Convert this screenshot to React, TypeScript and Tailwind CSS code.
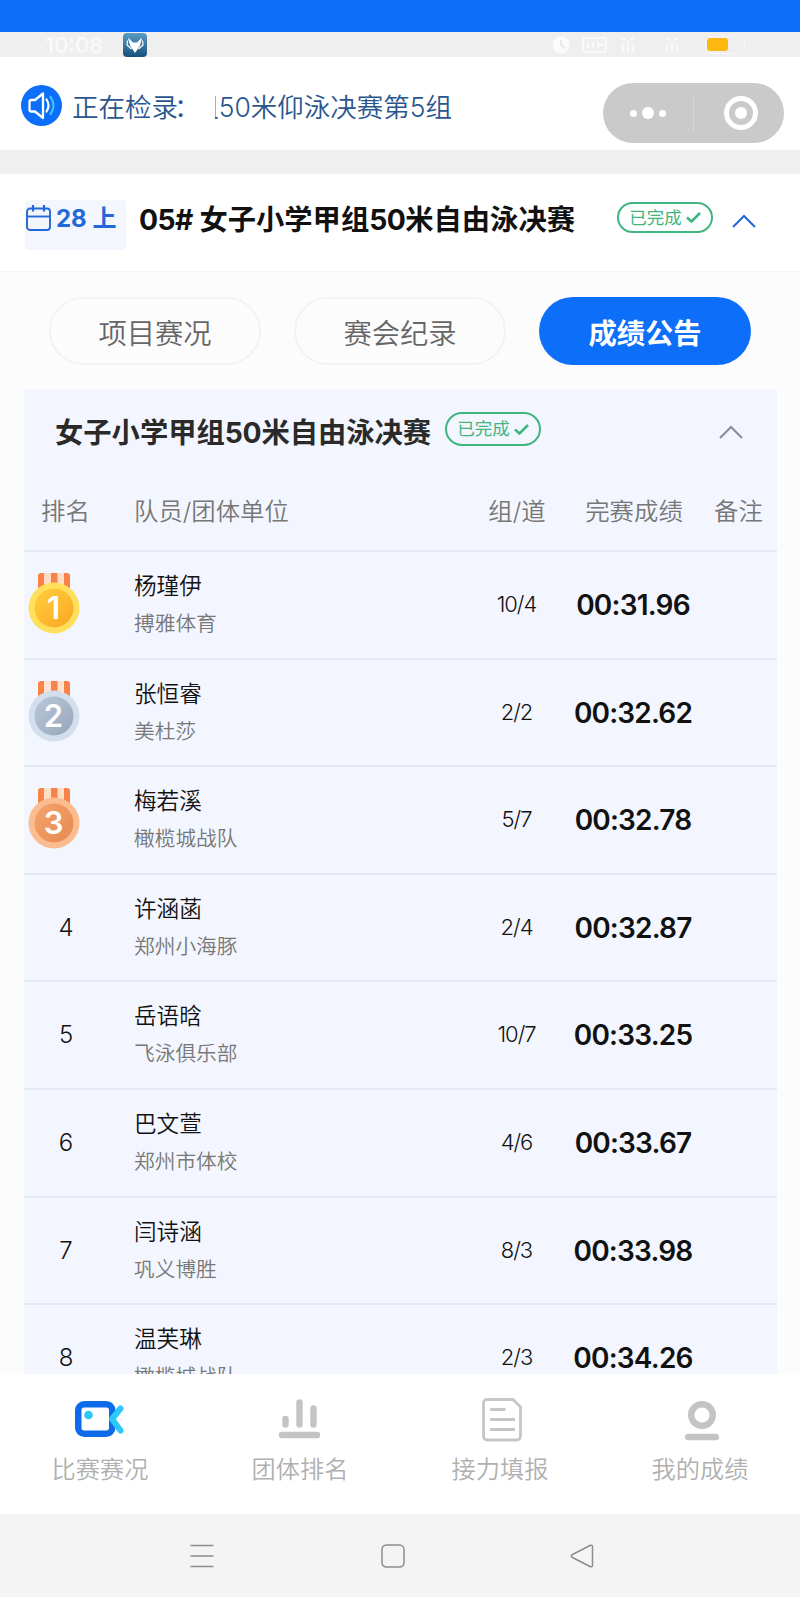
import clsx from "clsx";
import type { ReactNode } from "react";

type Result = {
  rank: number;
  name: string;
  club: string;
  lane: string;
  time: string;
};

const results: Result[] = [
  { rank: 1, name: "杨瑾伊", club: "搏雅体育", lane: "10/4", time: "00:31.96" },
  { rank: 2, name: "张恒睿", club: "美杜莎", lane: "2/2", time: "00:32.62" },
  { rank: 3, name: "梅若溪", club: "橄榄城战队", lane: "5/7", time: "00:32.78" },
  { rank: 4, name: "许涵菡", club: "郑州小海豚", lane: "2/4", time: "00:32.87" },
  { rank: 5, name: "岳语晗", club: "飞泳俱乐部", lane: "10/7", time: "00:33.25" },
  { rank: 6, name: "巴文萱", club: "郑州市体校", lane: "4/6", time: "00:33.67" },
  { rank: 7, name: "闫诗涵", club: "巩义博胜", lane: "8/3", time: "00:33.98" },
  { rank: 8, name: "温芙琳", club: "橄榄城战队", lane: "2/3", time: "00:34.26" },
];

const medalColors = [
  { outer: "#ffe05c", from: "#ffcf3d", to: "#fba624", strap: "#ffdcc4" },
  { outer: "#d3dfec", from: "#b9c7da", to: "#98a6bb", strap: "#ffe3d0" },
  { outer: "#fbbd90", from: "#f4a36c", to: "#e68a52", strap: "#ffdcc4" },
];

function Medal({ rank }: { rank: number }) {
  const colors = medalColors[rank - 1];

  return (
    <svg className="h-[61px] w-[52px]" viewBox="0 0 52 61">
      <defs>
        <linearGradient id={`medal-${rank}`} x1="0" x2="1" y1="0" y2="1">
          <stop offset="0" stopColor={colors.from} />
          <stop offset="1" stopColor={colors.to} />
        </linearGradient>
      </defs>
      <path d="M12 0h28l2 3v17H10V3z" fill={colors.strap} />
      <path
        d="M10 3q0-3 3-3h3v20h-6zM23 0h6.500v20H23zM36 0h3q3 0 3 3v17h-6z"
        fill="#f8834a"
      />
      <circle cx="26" cy="35" fill={colors.outer} r="25.500" />
      <circle cx="26" cy="35" fill={`url(#medal-${rank})`} r="19.500" />
      <text
        fill="#fff"
        fontFamily="Inter, sans-serif"
        fontSize="31"
        fontWeight="600"
        textAnchor="middle"
        x="25.500"
        y="46"
      >
        {rank}
      </text>
    </svg>
  );
}

function DoneBadge({ className }: { className?: string }) {
  return (
    <span
      className={clsx(
        "flex w-24 shrink-0 items-center justify-center rounded-full border-2 border-[#3fb57f] text-[17.5px] leading-none text-[#3fb57f]",
        className,
      )}
    >
      已完成
      <svg className="ml-1 h-[11px] w-[15px]" fill="none" viewBox="0 0 15 11">
        <path d="M1 5.500 5.500 9.500 14 1" stroke="currentColor" strokeWidth="2.600" />
      </svg>
    </span>
  );
}

function Chevron({ className }: { className?: string }) {
  return (
    <svg className={clsx("h-[14px] w-6", className)} fill="none" viewBox="0 0 24 14">
      <path d="M1 13 12 2l11 11" stroke="currentColor" strokeWidth="2" />
    </svg>
  );
}

function StatusBar() {
  return (
    <>
      <div className="h-8 bg-[#0d6efa]" />
      <div className="flex h-[25px] items-center bg-[#efefef] text-[#fafafa]">
        <span className="ml-[45px] w-[78px] text-[22px] font-medium leading-none">10:08</span>
        <svg className="size-6" viewBox="0 0 24 24">
          <defs>
            <linearGradient id="app-badge" x1="0" x2="0" y1="0" y2="1">
              <stop offset="0" stopColor="#5b9cc4" />
              <stop offset="1" stopColor="#17517f" />
            </linearGradient>
          </defs>
          <rect fill="url(#app-badge)" height="24" rx="4" width="24" />
          <path d="M5 4.500 10 9.500h4l5-5-2 8-5 7.500-5-7.500z" fill="#fff" />
          <path
            d="M4.500 7.500 4 12l4.500 4M19.500 7.500 20 12l-4.500 4"
            fill="none"
            stroke="#fff"
            strokeWidth="1.200"
          />
        </svg>
        <div className="ml-[405px] flex items-center">
          <svg className="h-[18px] w-[153px]" fill="none" viewBox="0 0 153 18">
            <circle cx="9" cy="9" fill="#fbfbfb" r="8.500" />
            <path d="M9 4v5l4 3" stroke="#e8e8e8" strokeWidth="2" />
            <rect height="14" rx="2" stroke="#fafafa" strokeWidth="2" width="23" x="31" y="2" />
            <path d="M36 6v6M41 6v6M46 9h5M46 6v6" stroke="#fafafa" strokeWidth="2" />
            <path
              d="M69 3h5M78 3h4M71 7v10M76 5v12M81 8v9M113 3h5M122 3h4M115 7v10M120 5v12M125 8v9"
              stroke="#f8f8f8"
              strokeWidth="2.500"
            />
          </svg>
          <div className="flex h-[18px] w-[40px] items-center rounded-md border border-[#f6f6f6]">
            <div className="ml-px h-[13px] w-[21px] rounded-[3px] bg-[#fdb90f]" />
          </div>
        </div>
      </div>
    </>
  );
}

function Announcement() {
  return (
    <div className="flex h-[93px] items-center bg-white pl-[21px] pr-4">
      <svg className="mt-1 size-[41px]" fill="none" viewBox="0 0 41 41">
        <circle cx="20.500" cy="20.500" fill="#0d6efa" r="20.500" />
        <path
          d="M8.500 17q0-2 2-2H14l8-6.500v24.500l-8-6.500h-3.500q-2 0-2-2z"
          stroke="#fff"
          strokeLinejoin="round"
          strokeWidth="2.300"
        />
        <path d="M25.500 14.500q4 6 0 12" stroke="#fff" strokeLinecap="round" strokeWidth="2.200" />
        <path d="M29.500 12q6 8.500 0 17" stroke="#3cc4fb" strokeLinecap="round" strokeWidth="2.200" />
      </svg>
      <div className="mt-2 flex grow items-center pl-2.5 text-[26.500px] font-[350] text-[#2a568e]">
        <span className="w-[143px] whitespace-nowrap">
          正在检录<span className="-ml-1">：</span>
        </span>
        <div className="flex w-[237px] justify-end overflow-hidden whitespace-nowrap">
          组50米仰泳决赛第5组
        </div>
      </div>
      <div className="mt-[19px] flex h-[60px] w-[181px] items-center rounded-full bg-[#cacaca]">
        <div className="flex w-[90px] items-center justify-center gap-[5px]">
          <i className="size-[7px] rounded-full bg-white" />
          <i className="size-3 rounded-full bg-white" />
          <i className="size-[7px] rounded-full bg-white" />
        </div>
        <div className="h-9 w-px bg-[#d9d9d9]" />
        <div className="ml-[30px] flex size-[34px] items-center justify-center rounded-full border-[5px] border-white">
          <i className="size-3 rounded-full bg-white" />
        </div>
      </div>
    </div>
  );
}

function EventHeader() {
  return (
    <div className="flex h-[97px] bg-white">
      <div className="ml-[25px] mt-[26px] flex h-[50px] w-[101px] rounded bg-[#f3f6fd] text-[#2468d8]">
        <svg className="ml-px mt-[5px] h-[26px] w-[25px]" fill="none" viewBox="0 0 25 26">
          <rect height="21.500" rx="3" stroke="currentColor" strokeWidth="1.900" width="23" x="1" y="3.500" />
          <path d="M1 11.500h23" stroke="currentColor" strokeWidth="1.900" />
          <path d="M7 0v6.500M18 0v6.500" stroke="currentColor" strokeWidth="2.200" />
        </svg>
        <span className="ml-[5px] whitespace-nowrap text-[24px] font-bold leading-[38px]">
          28 上
        </span>
      </div>
      <h1 className="ml-[13px] mt-[26px] w-[478px] whitespace-nowrap text-[28.300px] font-bold leading-10 text-[#111]">
        <span className="tracking-[-0.600px]">05#</span> 女子小学甲组
        <span className="tracking-[-0.600px]">50</span>米自由泳决赛
      </h1>
      <DoneBadge className="mt-7 h-[31px]" />
      <Chevron className="ml-[19px] mt-10 text-[#2468d8]" />
    </div>
  );
}

function Pill({ active, children }: { active?: boolean; children: ReactNode }) {
  return (
    <button
      className={clsx(
        "h-[68px] w-[212px] rounded-full pt-1.5 text-[28.300px]",
        active
          ? "bg-[#0d6efa] font-bold text-white"
          : "border-2 border-[#f3f3f3] font-[350] text-[#666]",
      )}
      type="button"
    >
      {children}
    </button>
  );
}

function ResultRow({ result }: { result: Result }) {
  return (
    <div className="flex h-[107.600px] shrink-0 border-t-2 border-[#e3e8f1] text-[#111]">
      <div className="w-[110px]">
        {result.rank <= 3 ? (
          <div className="ml-1 mt-[21px]">
            <Medal rank={result.rank} />
          </div>
        ) : (
          <p className="w-[84px] text-center text-[24px] font-light leading-[106px]">
            {result.rank}
          </p>
        )}
      </div>
      <div className="w-[332px]">
        <p className="mt-[17px] text-[22.600px] font-[350] leading-[34px]">{result.name}</p>
        <p className="mt-1 text-[20.700px] font-[350] leading-[34px] text-[#777]">{result.club}</p>
      </div>
      <p className="w-[101px] text-center text-[22px] font-light leading-[105px] tracking-[-1px]">
        {result.lane}
      </p>
      <p className="w-[132px] text-center text-[28px] font-semibold leading-[106px] tracking-[-0.800px]">
        {result.time}
      </p>
    </div>
  );
}

function ResultPanel() {
  return (
    <section className="mx-6 flex h-[985px] w-[753px] flex-col overflow-hidden bg-[#f3f6fe]">
      <div className="flex h-[86px] shrink-0 items-center pl-[31px]">
        <h2 className="mt-0.5 w-[390px] whitespace-nowrap text-[28.300px] font-bold text-[#2a2a2a]">
          女子小学甲组<span className="tracking-[-0.300px]">50</span>米自由泳决赛
        </h2>
        <DoneBadge className="mb-1.5 h-[34px]" />
        <Chevron className="ml-[178px] text-[#8a8d93]" />
      </div>
      <div className="flex h-[75px] shrink-0 items-center whitespace-nowrap pb-0.5 text-[24.400px] font-[350] text-[#777]">
        <span className="ml-[17px] w-[93px]">排名</span>
        <span className="w-[332px]">队员/团体单位</span>
        <span className="w-[102px] text-center">组/道</span>
        <span className="w-[132px] text-center">完赛成绩</span>
        <span className="w-[77px] text-center">备注</span>
      </div>
      {results.map((result) => (
        <ResultRow key={result.rank} result={result} />
      ))}
    </section>
  );
}

function CameraIcon() {
  return (
    <svg className="h-[44px] w-[52px]" fill="none" viewBox="0 0 52 44">
      <rect height="29.500" rx="6" stroke="#0d6bea" strokeWidth="6.500" width="34" x="4.250" y="6.250" />
      <circle cx="14.500" cy="17" fill="#2cc8f5" r="4.300" />
      <path
        d="M46.500 10.500 38 21l8.500 11.500"
        stroke="#2cc8fb"
        strokeLinecap="round"
        strokeLinejoin="round"
        strokeWidth="6"
      />
    </svg>
  );
}

function RankingIcon() {
  return (
    <svg className="h-[44px] w-[44px]" fill="none" viewBox="0 0 44 44">
      <path
        d="M7.500 21v5.500M21.500 4.500v22M35.500 10.500v16M4 37h35"
        stroke="#c4c4c4"
        strokeLinecap="round"
        strokeWidth="6.400"
      />
    </svg>
  );
}

function FormIcon() {
  return (
    <svg className="ml-1 h-[44px] w-[40px]" fill="none" viewBox="0 0 40 44">
      <path
        d="M5 1.500h26l7.500 7.500v29q0 4-4 4H5.500q-4 0-4-4V5.500q0-4 4-4z"
        stroke="#c6c6c6"
        strokeWidth="2.800"
      />
      <path d="M8 11.500h15.500M8 21.500h25M8 31.500h25" stroke="#c6c6c6" strokeWidth="3" />
    </svg>
  );
}

function ProfileIcon() {
  return (
    <svg className="ml-1 h-[44px] w-[36px]" fill="none" viewBox="0 0 36 44">
      <circle cx="18" cy="17" r="10.800" stroke="#c4c4c4" strokeWidth="6.400" />
      <path d="M4.200 39h27.600" stroke="#c4c4c4" strokeLinecap="round" strokeWidth="6.400" />
    </svg>
  );
}

const tabs = [
  { label: "比赛赛况", icon: <CameraIcon /> },
  { label: "团体排名", icon: <RankingIcon /> },
  { label: "接力填报", icon: <FormIcon /> },
  { label: "我的成绩", icon: <ProfileIcon /> },
];

export default function App() {
  return (
    <main className="flex h-[1597px] w-[800px] flex-col overflow-hidden bg-[#fcfcfc] font-[Inter,'Noto_Sans_CJK_SC',sans-serif]">
      <StatusBar />
      <Announcement />
      <div className="h-6 bg-[#efefef]" />
      <EventHeader />
      <div className="flex h-[118px] gap-[33px] border-t border-[#f7f7f7] pl-[49px] pt-[25px]">
        <Pill>项目赛况</Pill>
        <Pill>赛会纪录</Pill>
        <Pill active>成绩公告</Pill>
      </div>
      <ResultPanel />
      <nav className="grid h-[140px] shrink-0 grid-cols-4 bg-white">
        {tabs.map((tab) => (
          <div key={tab.label} className="flex flex-col items-center pt-6">
            {tab.icon}
            <span className="mt-[10px] text-[24.200px] font-[350] leading-9 text-[#b0b0b0]">
              {tab.label}
            </span>
          </div>
        ))}
      </nav>
      <div className="flex h-[83px] shrink-0 items-center bg-[#f4f4f4] pl-[190px] text-[#8c8c8c]">
        <svg className="size-6" fill="none" viewBox="0 0 24 24">
          <path d="M.5 1.500h23M.5 12h23M.5 22.500h23" stroke="currentColor" strokeWidth="1.600" />
        </svg>
        <svg className="ml-[167px] size-6" fill="none" viewBox="0 0 24 24">
          <rect height="22" rx="4.500" stroke="currentColor" strokeWidth="1.500" width="22" x="1" y="1" />
        </svg>
        <svg className="ml-[165px] size-6" fill="none" viewBox="0 0 24 24">
          <path
            d="M2.500 10.500 20 1.500q2.500-1 2.500 1.500v18q0 2.500-2.500 1.500l-17.500-9q-2.500-1.500 0-3z"
            stroke="currentColor"
            strokeWidth="1.500"
          />
        </svg>
      </div>
    </main>
  );
}
